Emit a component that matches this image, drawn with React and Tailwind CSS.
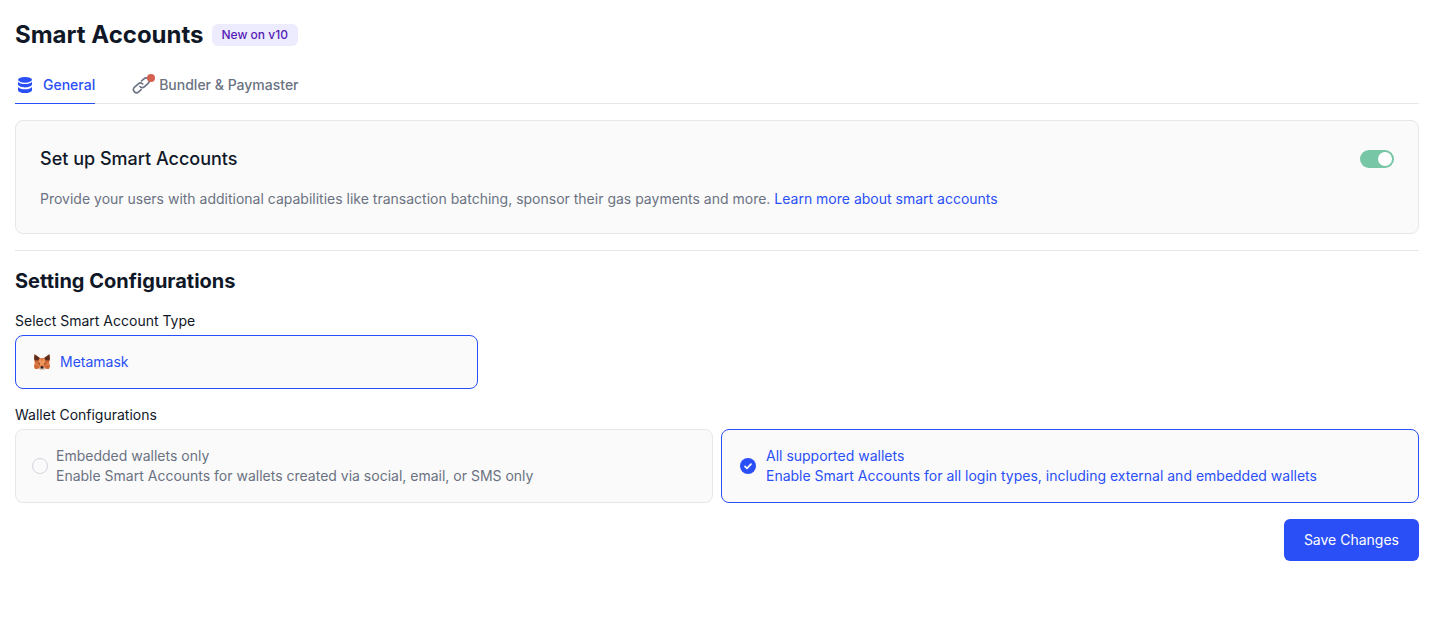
import { useState } from "react";

function DatabaseIcon() {
  return (
    <svg viewBox="0 0 20 20" className="size-5 shrink-0" fill="currentColor" aria-hidden="true">
      <ellipse cx="10" cy="4.8" rx="7" ry="2.9" />
      <path d="M3 6.7C4.2 8.3 7 9 10 9s5.8-.7 7-2.300V9.300c0 1.900-3.100 3.100-7 3.100S3 11.200 3 9.300z" />
      <path d="M3 11.900c1.200 1.600 4 2.300 7 2.300s5.800-.7 7-2.300v3c0 1.900-3.100 3.100-7 3.100s-7-1.200-7-3.100z" />
    </svg>
  );
}

function LinkIcon() {
  return (
    <svg
      viewBox="0 0 20 20"
      className="size-5 shrink-0"
      fill="none"
      stroke="currentColor"
      strokeWidth="1.6"
      strokeLinecap="round"
      strokeLinejoin="round"
      aria-hidden="true"
    >
      <g transform="translate(10.300 10.300) rotate(-42)">
        <path d="M-3 3.100H-6.300A3.100 3.100 0 0 1-6.300-3.100H-1.200A3.100 3.100 0 0 1 1.900 0" />
        <path d="M3-3.100H6.300A3.100 3.100 0 0 1 6.300 3.100H1.200A3.100 3.100 0 0 1-1.900 0" />
      </g>
    </svg>
  );
}

function FoxIcon() {
  return (
    <svg viewBox="0 0 20 20" className="size-5 shrink-0" aria-hidden="true">
      <path
        d="M2.600 2.200 8 6h4l5.400-3.800.6 5.300-.8 2.800.8 3.400-1.100 3.200-3.400-.5-2 1.400h-3l-2-1.400-3.400.5L2 13.700l.8-3.400L2 7.500z"
        fill="#e07a45"
      />
      <path d="M2.600 2.200 7.800 6 6.400 8.600 3 8.800 2.100 6.800zM17.400 2.200 12.200 6l1.400 2.600 3.400.2.900-2z" fill="#5b2c1d" />
      <path d="m3 8.800 3.400-.2 1.200 2.600-4.800-.9zM17 8.800l-3.400-.2-1.200 2.600 4.800-.9z" fill="#c96235" />
      <path d="m8 6 2 3.400L12 6l1.200 3.200-1.400 4H8.200l-1.400-4z" fill="#ee955c" />
      <path d="m2 13.700 4.600-.4-.1 3.100-3.400.5zM18 13.700l-4.600-.4.100 3.100 3.400.5z" fill="#cf6636" />
      <path d="m5.700 11.400 2.300.1-.3 1.300zM14.300 11.400l-2.300.1.300 1.300z" fill="#4a2c28" />
      <path d="m6.500 16 2-.8h3l2 .8-1.900 1.900H8.400z" fill="#d8c8bd" />
      <path d="m8.700 14.700.4-.4h1.800l.4.400.2 1.700h-3z" fill="#241d24" />
    </svg>
  );
}

function CheckCircleIcon() {
  return (
    <svg viewBox="0 0 20 20" className="size-5 shrink-0" aria-hidden="true">
      <circle cx="10" cy="10" r="8" fill="currentColor" />
      <path d="m7 10.400 2 2 4-4.200" fill="none" stroke="#fff" strokeWidth="1.700" strokeLinecap="round" strokeLinejoin="round" />
    </svg>
  );
}

const walletOptions = [
  {
    id: "embedded",
    title: "Embedded wallets only",
    description: "Enable Smart Accounts for wallets created via social, email, or SMS only",
  },
  {
    id: "all",
    title: "All supported wallets",
    description: "Enable Smart Accounts for all login types, including external and embedded wallets",
  },
];

function WalletOption({ option, checked, onSelect }) {
  return (
    <label
      className={`relative flex cursor-pointer items-center gap-2 rounded-lg border bg-[#fafafa] p-4 text-sm ${
        checked ? "border-[#2a4ff6] text-[#2a4ff6]" : "border-gray-200 text-gray-500"
      }`}
    >
      <input
        type="radio"
        name="wallets"
        value={option.id}
        checked={checked}
        onChange={onSelect}
        className="sr-only"
      />
      {checked ? <CheckCircleIcon /> : <span className="size-4 shrink-0 rounded-full border border-gray-300" />}
      <span>
        <span className="block">{option.title}</span>
        <span className="block">{option.description}</span>
      </span>
    </label>
  );
}

export default function App() {
  const [enabled, setEnabled] = useState(true);
  const [wallets, setWallets] = useState("all");

  return (
    <main className="bg-white pt-[19px] pr-[17px] pb-8 pl-[15px] font-['Inter',sans-serif] text-gray-900">
      <header className="flex items-center gap-2">
        <h1 className="text-2xl font-bold">Smart Accounts</h1>
        <span className="rounded-md bg-[#edebfe] px-2.5 py-0.5 text-xs leading-[18px] font-medium text-[#5521b5]">
          New on v10
        </span>
      </header>

      <nav className="mt-4 flex gap-9 border-b border-gray-200 text-sm font-medium">
        <a href="#general" aria-current="page" className="-mb-px flex items-center gap-2 border-b border-[#2a4ff6] pt-2 pb-2 text-[#2a4ff6]">
          <DatabaseIcon />
          General
        </a>
        <a href="#bundler" className="flex items-center gap-2 pt-2 pb-2 text-gray-500">
          <span className="relative">
            <LinkIcon />
            <span className="absolute -top-px -right-1 size-2 rounded-full bg-[#d4604f]" />
          </span>
          Bundler &amp; Paymaster
        </a>
      </nav>

      <section className="mt-4 rounded-lg border border-gray-200 bg-[#fafafa] p-6">
        <div className="flex items-center justify-between">
          <label htmlFor="enable" className="text-lg font-medium">
            Set up Smart Accounts
          </label>
          <input
            id="enable"
            type="checkbox"
            role="switch"
            checked={enabled}
            onChange={(e) => setEnabled(e.target.checked)}
            className="flex h-[18px] w-[34px] cursor-pointer appearance-none items-center rounded-full bg-gray-300 px-0.5 before:size-3.5 before:rounded-full before:bg-white checked:justify-end checked:bg-[#77c6a5]"
          />
        </div>
        <p className="mt-4 text-sm text-gray-500">
          Provide your users with additional capabilities like transaction batching, sponsor their gas payments and more.{" "}
          <a href="#learn" className="text-[#2a4ff6]">
            Learn more about smart accounts
          </a>
        </p>
      </section>

      <hr className="my-4 border-gray-200" />

      <h2 className="text-xl font-bold">Setting Configurations</h2>

      <h3 className="mt-4 mb-1 text-sm">Select Smart Account Type</h3>
      <div className="grid grid-cols-3 gap-2">
        <button
          type="button"
          aria-pressed="true"
          className="flex items-center gap-2 rounded-lg border border-[#2a4ff6] bg-[#fafafa] p-4 text-sm text-[#2a4ff6]"
        >
          <FoxIcon />
          Metamask
        </button>
      </div>

      <fieldset className="mt-4">
        <legend className="mb-1 text-sm">Wallet Configurations</legend>
        <div className="grid grid-cols-2 gap-2">
          {walletOptions.map((option) => (
            <WalletOption
              key={option.id}
              option={option}
              checked={wallets === option.id}
              onSelect={() => setWallets(option.id)}
            />
          ))}
        </div>
      </fieldset>

      <div className="mt-4 flex justify-end">
        <button type="button" className="rounded-md bg-[#2a4ff6] px-5 py-[11px] text-sm text-white">
          Save Changes
        </button>
      </div>
    </main>
  );
}
